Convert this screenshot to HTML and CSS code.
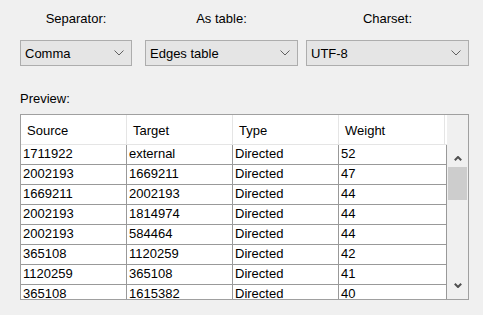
FILE: index.html
```html
<!DOCTYPE html>
<html lang="en">
<head>
    <meta charset="UTF-8">
    <meta name="viewport" content="width=device-width, initial-scale=1.0">
    <title>Import Spreadsheet</title>
    <link rel="stylesheet" href="styles.css">
</head>
<body>
    <div class="dialog">
        <div class="options">
            <div class="field field-sep">
                <div class="field-label">Separator:</div>
                <div class="combo">
                    <span>Comma</span>
                    <svg class="chevron" width="10" height="6" viewBox="0 0 10 6"><polyline points="0.5,0.5 5,5 9.5,0.5" /></svg>
                </div>
            </div>
            <div class="field field-table">
                <div class="field-label">As table:</div>
                <div class="combo">
                    <span>Edges table</span>
                    <svg class="chevron" width="10" height="6" viewBox="0 0 10 6"><polyline points="0.5,0.5 5,5 9.5,0.5" /></svg>
                </div>
            </div>
            <div class="field field-charset">
                <div class="field-label">Charset:</div>
                <div class="combo">
                    <span>UTF-8</span>
                    <svg class="chevron" width="10" height="6" viewBox="0 0 10 6"><polyline points="0.5,0.5 5,5 9.5,0.5" /></svg>
                </div>
            </div>
        </div>

        <div class="preview-label">Preview:</div>

        <div class="preview">
            <div class="grid">
                <div class="header-row">
                    <div class="head-cell">Source</div>
                    <div class="head-cell">Target</div>
                    <div class="head-cell">Type</div>
                    <div class="head-cell">Weight</div>
                </div>
                <div id="rows" class="rows"></div>
            </div>
            <div class="side">
                <div class="corner"></div>
                <div class="scrollbar">
                    <div class="arrow arrow-up">
                        <svg width="8" height="5" viewBox="0 0 8 5"><polyline points="0.8,4.2 4,1 7.2,4.2" /></svg>
                    </div>
                    <div class="thumb"></div>
                    <div class="track"></div>
                    <div class="arrow arrow-down">
                        <svg width="8" height="5" viewBox="0 0 8 5"><polyline points="0.8,0.8 4,4 7.2,0.8" /></svg>
                    </div>
                </div>
            </div>
        </div>
    </div>

    <script>
        // Preview rows
        const edges = [
            ["1711922", "external", "Directed", "52"],
            ["2002193", "1669211", "Directed", "47"],
            ["1669211", "2002193", "Directed", "44"],
            ["2002193", "1814974", "Directed", "44"],
            ["2002193", "584464", "Directed", "44"],
            ["365108", "1120259", "Directed", "42"],
            ["1120259", "365108", "Directed", "41"],
            ["365108", "1615382", "Directed", "40"]
        ];

        document.getElementById('rows').innerHTML = edges.map(row => `
            <div class="row">
                ${row.map(value => `<div class="cell">${value}</div>`).join('')}
            </div>
        `).join('');
    </script>
</body>
</html>
```

FILE: styles.css
```css
* {
    margin: 0;
    padding: 0;
    box-sizing: border-box;
}

body {
    font-family: "Liberation Sans", Arial, sans-serif;
    font-size: 13px;
    color: #000;
    background-color: #f0f0f0;
}

.dialog {
    padding: 11px 0 0 20px;
}

.options {
    display: flex;
}

.field-label {
    height: 16px;
    line-height: 16px;
    text-align: center;
    color: #000;
    margin-bottom: 13px;
}

.field-sep {
    width: 112px;
    margin-right: 13px;
}

.field-table {
    width: 153px;
    margin-right: 8px;
}

.field-charset {
    width: 163px;
}

.combo {
    display: flex;
    align-items: center;
    justify-content: space-between;
    height: 26px;
    padding: 0 7px 0 4px;
    background-color: #e5e5e5;
    border: 1px solid #adadad;
}

.chevron polyline {
    fill: none;
    stroke: #606060;
    stroke-width: 1;
}

.preview-label {
    height: 16px;
    line-height: 16px;
    margin-top: 25px;
    margin-bottom: 7px;
}

.preview {
    display: flex;
    width: 449px;
    height: 186px;
    border: 1px solid #a0a0a0;
    background-color: #fff;
    overflow: hidden;
}

.grid {
    width: 426px;
}

.header-row,
.row {
    display: grid;
    grid-template-columns: 106px 106px 106px 108px;
}

.header-row {
    height: 30px;
    border-bottom: 1px solid #e5e5e5;
}

.head-cell {
    padding: 2px 0 0 6px;
    line-height: 27px;
    border-right: 1px solid #e5e5e5;
}

.head-cell:last-child {
    margin-right: 2px;
}

.row {
    height: 20px;
}

.cell {
    height: 20px;
    line-height: 18px;
    padding-left: 2px;
    border-right: 1px solid #999;
    border-bottom: 1px solid #999;
    white-space: nowrap;
}

.side {
    display: flex;
    flex-direction: column;
    flex: 1;
    background-color: #f0f0f0;
}

.corner {
    height: 30px;
}

.scrollbar {
    display: flex;
    flex-direction: column;
    flex: 1;
}

.arrow {
    display: flex;
    justify-content: center;
    height: 22px;
}

.arrow-up {
    align-items: flex-end;
    padding-bottom: 6px;
}

.arrow-down {
    align-items: flex-start;
    padding-top: 6px;
}

.arrow polyline {
    fill: none;
    stroke: #505050;
    stroke-width: 2;
}

.thumb {
    height: 33px;
    margin: 0 1px;
    background-color: #cdcdcd;
}

.track {
    flex: 1;
}
```
